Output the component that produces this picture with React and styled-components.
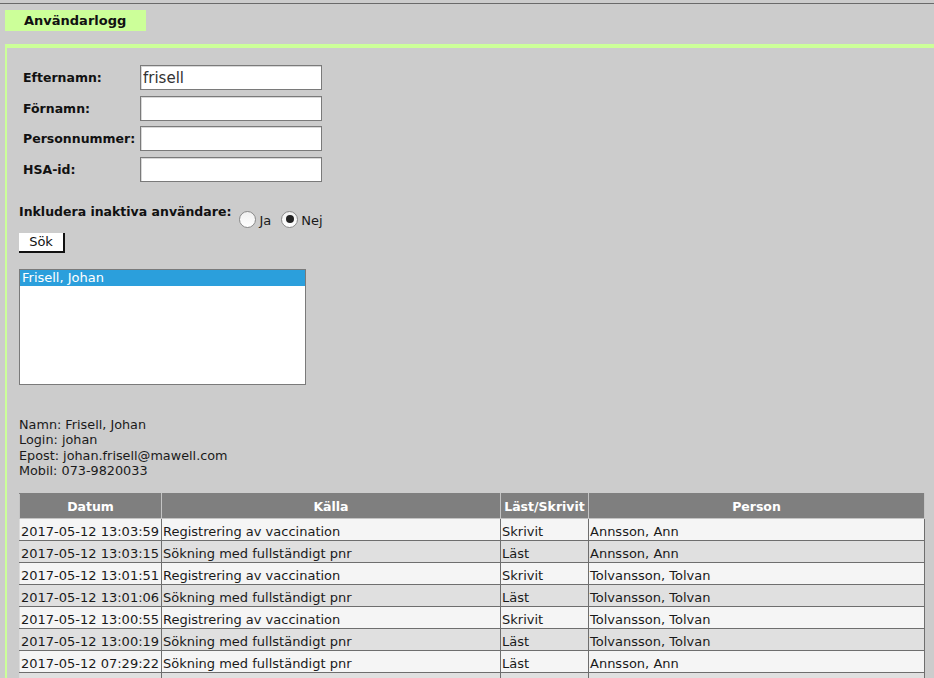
import React from 'react';
import styled, { createGlobalStyle } from 'styled-components';

const GlobalStyle = createGlobalStyle`
  html, body {
    margin: 0;
    padding: 0;
    background: #cccccc;
    font-family: "DejaVu Sans", Verdana, sans-serif;
    font-size: 13px;
    color: #1a1a1a;
  }
  ::-webkit-scrollbar {
    display: none;
  }
`;

const logRows = [
  { datum: '2017-05-12 13:03:59', kalla: 'Registrering av vaccination', typ: 'Skrivit', person: 'Annsson, Ann' },
  { datum: '2017-05-12 13:03:15', kalla: 'Sökning med fullständigt pnr', typ: 'Läst', person: 'Annsson, Ann' },
  { datum: '2017-05-12 13:01:51', kalla: 'Registrering av vaccination', typ: 'Skrivit', person: 'Tolvansson, Tolvan' },
  { datum: '2017-05-12 13:01:06', kalla: 'Sökning med fullständigt pnr', typ: 'Läst', person: 'Tolvansson, Tolvan' },
  { datum: '2017-05-12 13:00:55', kalla: 'Registrering av vaccination', typ: 'Skrivit', person: 'Tolvansson, Tolvan' },
  { datum: '2017-05-12 13:00:19', kalla: 'Sökning med fullständigt pnr', typ: 'Läst', person: 'Tolvansson, Tolvan' },
  { datum: '2017-05-12 07:29:22', kalla: 'Sökning med fullständigt pnr', typ: 'Läst', person: 'Annsson, Ann' },
  { datum: '', kalla: '', typ: '', person: '' },
];

const fields = [
  { label: 'Efternamn:', value: 'frisell' },
  { label: 'Förnamn:', value: '' },
  { label: 'Personnummer:', value: '' },
  { label: 'HSA-id:', value: '' },
];

const App = () => {
  return (
    <>
      <GlobalStyle />
      <Page>
        <Tab>Användarlogg</Tab>
        <Panel>
          <SearchForm>
            {fields.map((f) => (
              <React.Fragment key={f.label}>
                <FieldLabel>{f.label}</FieldLabel>
                <TextInput defaultValue={f.value} />
              </React.Fragment>
            ))}
          </SearchForm>

          <InactiveRow>
            <InactiveLabel>Inkludera inaktiva användare:</InactiveLabel>
            <RadioGroup>
              <RadioOption>
                <RadioDot />
                Ja
              </RadioOption>
              <RadioOption>
                <RadioDot checked />
                Nej
              </RadioOption>
            </RadioGroup>
          </InactiveRow>

          <SearchButton>Sök</SearchButton>

          <ListBox>
            <ListOption selected>Frisell, Johan</ListOption>
          </ListBox>

          <UserInfo>
            <div>Namn: Frisell, Johan</div>
            <div>Login: johan</div>
            <div>Epost: johan.frisell@mawell.com</div>
            <div>Mobil: 073-9820033</div>
          </UserInfo>

          <LogTable>
            <colgroup>
              <col style={{ width: 142 }} />
              <col style={{ width: 339 }} />
              <col style={{ width: 88 }} />
              <col />
            </colgroup>
            <thead>
              <tr>
                <HeadCell>Datum</HeadCell>
                <HeadCell>Källa</HeadCell>
                <HeadCell>Läst/Skrivit</HeadCell>
                <HeadCell>Person</HeadCell>
              </tr>
            </thead>
            <tbody>
              {logRows.map((row, index) => (
                <BodyRow key={index} even={index % 2 === 1}>
                  <Cell>{row.datum}</Cell>
                  <Cell>{row.kalla}</Cell>
                  <Cell>{row.typ}</Cell>
                  <Cell>{row.person}</Cell>
                </BodyRow>
              ))}
            </tbody>
          </LogTable>
        </Panel>
      </Page>
    </>
  );
};

const Page = styled.div`
  margin-top: 3px;
  border-top: 1px solid #6a6a6a;
  padding-top: 6px;
`;

const Tab = styled.div`
  margin-left: 5px;
  width: 122px;
  height: 21px;
  padding-left: 19px;
  background: #ccff99;
  font-weight: bold;
  font-size: 13px;
  line-height: 22px;
  color: #111;
`;

const Panel = styled.div`
  margin-top: 13px;
  margin-left: 5px;
  border-top: 4px solid #ccff99;
  border-left: 2px solid #ccff99;
  padding: 17px 9px 0 12px;
`;

const SearchForm = styled.div`
  display: grid;
  grid-template-columns: 117px 182px;
  row-gap: 5.67px;
  margin-left: 4px;
  align-items: center;
`;

const FieldLabel = styled.label`
  font-weight: bold;
  font-size: 12.5px;
  color: #111;
`;

const TextInput = styled.input`
  box-sizing: border-box;
  width: 182px;
  height: 25px;
  margin: 0;
  padding: 0 2px;
  border: 1px solid #7a7a7a;
  box-shadow: inset 1px 1px 0 #d8d8d8;
  background: #fff;
  font-family: "DejaVu Sans", Verdana, sans-serif;
  font-size: 15px;
  color: #333;
  outline: none;
`;

const InactiveRow = styled.div`
  display: flex;
  align-items: flex-start;
  margin-top: 22px;
  height: 24px;
`;

const InactiveLabel = styled.span`
  font-weight: bold;
  font-size: 12.5px;
  color: #111;
  line-height: 16px;
`;

const RadioGroup = styled.div`
  display: flex;
  align-items: center;
  margin-left: 8px;
  padding-top: 7px;
  gap: 10px;
`;

const RadioOption = styled.label`
  display: flex;
  align-items: center;
  gap: 3px;
  line-height: 16px;
  padding-top: 2px;
`;

const RadioDot = styled.span`
  position: relative;
  display: inline-block;
  box-sizing: border-box;
  width: 17px;
  height: 17px;
  margin-top: -3px;
  border-radius: 50%;
  border: 1px solid #8a8a8a;
  background: linear-gradient(#f0f0f0, #ffffff);

  &::after {
    content: '';
    display: ${(p) => (p.checked ? 'block' : 'none')};
    position: absolute;
    left: 3.5px;
    top: 3.5px;
    width: 8px;
    height: 8px;
    border-radius: 50%;
    background: #222;
  }
`;

const SearchButton = styled.button`
  display: block;
  box-sizing: border-box;
  width: 46px;
  height: 20px;
  margin-top: 5px;
  padding: 0;
  border: none;
  border-right: 2px solid #111;
  border-bottom: 2px solid #111;
  background: #fff;
  font-family: "DejaVu Sans", Verdana, sans-serif;
  font-size: 13px;
  color: #111;
`;

const ListBox = styled.div`
  box-sizing: border-box;
  width: 287px;
  height: 116px;
  margin-top: 16px;
  border: 1px solid #7a7a7a;
  background: #fff;
`;

const ListOption = styled.div`
  height: 16px;
  line-height: 16px;
  padding-left: 2px;
  background: ${(p) => (p.selected ? '#2b9fdc' : 'transparent')};
  color: ${(p) => (p.selected ? '#fff' : '#111')};
`;

const UserInfo = styled.div`
  margin-top: 32px;
  line-height: 15.33px;
  font-size: 12.8px;
  color: #1a1a1a;
`;

const LogTable = styled.table`
  width: 100%;
  margin-top: 15px;
  border-collapse: collapse;
  table-layout: fixed;
`;

const HeadCell = styled.th`
  height: 23px;
  padding: 1px 1px 0;
  background: #7f7f7f;
  border: 1px solid #c4c4c4;
  border-top-color: #7f7f7f;
  color: #fff;
  font-size: 12.5px;
  font-weight: bold;
  text-align: center;
  white-space: nowrap;
`;

const BodyRow = styled.tr`
  background: ${(p) => (p.even ? '#e0e0e0' : '#f5f5f5')};
`;

const Cell = styled.td`
  box-sizing: border-box;
  height: 22px;
  padding: 4px 1px 0;
  border: 1px solid #6e6e6e;
  white-space: nowrap;
  overflow: hidden;
  line-height: 16px;

  &:first-child {
    border-left-color: #dcdcdc;
  }
`;

export default App;
